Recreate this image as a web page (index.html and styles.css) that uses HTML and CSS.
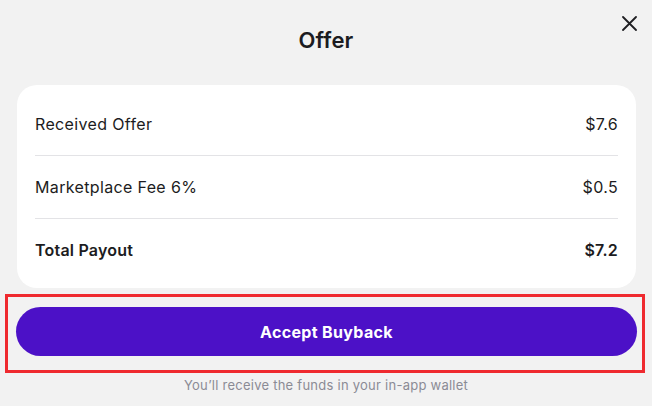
FILE: index.html
```html
<!DOCTYPE html>
<html>
<head>
<meta charset="utf-8">
<link rel="stylesheet" href="styles.css">
</head>
<body>
<div class="sheet">
  <header class="header">
    <span></span>
    <h1 class="title">Offer</h1>
    <button class="close" aria-label="Close">
      <svg width="15" height="15" viewBox="0 0 15 15"><path d="M1 1L14 14M14 1L1 14" stroke="#1f1f23" stroke-width="1.8" stroke-linecap="round"/></svg>
    </button>
  </header>
  <section class="card">
    <div class="row"><span>Received Offer</span><span>$7.6</span></div>
    <div class="row"><span>Marketplace Fee 6%</span><span>$0.5</span></div>
    <div class="row total"><span>Total Payout</span><span>$7.2</span></div>
  </section>
  <div class="highlight">
    <button class="accept">Accept Buyback</button>
  </div>
  <p class="note">You’ll receive the funds in your in-app wallet</p>
</div>
</body>
</html>
```
FILE: styles.css
```css
html, body {
  margin: 0;
  padding: 0;
  background: #f2f2f2;
}
body {
  font-family: Inter, "Noto Sans", sans-serif;
  color: #1c1c21;
  width: 652px;
  height: 406px;
  overflow: hidden;
}
.sheet {
  display: flex;
  flex-direction: column;
}
.header {
  display: grid;
  grid-template-columns: 1fr auto 1fr;
  align-items: start;
  height: 85px;
}
.title {
  margin: 27px 0 0;
  font-size: 22px;
  font-weight: 600;
  line-height: 27px;
  letter-spacing: 0.1px;
}
.close {
  justify-self: end;
  margin: 16px 15px 0 0;
  padding: 0;
  border: 0;
  background: none;
  width: 15px;
  height: 15px;
  display: flex;
}
.card {
  margin: 0 16px 0 17px;
  background: #fff;
  border-radius: 20px;
  padding: 8px 18px 7px;
  display: flex;
  flex-direction: column;
}
.row {
  display: flex;
  justify-content: space-between;
  align-items: center;
  height: 62px;
  font-size: 16px;
  letter-spacing: 0.35px;
  border-bottom: 1px solid #e3e3e6;
}
.row.total {
  border-bottom: 0;
  font-weight: 600;
  letter-spacing: 0.2px;
}
.highlight {
  margin: 6px 7px 0 5px;
  border: 3px solid #ef2a2f;
  padding: 10px 5px 14px 8px;
  display: flex;
}
.accept {
  flex: 1;
  height: 49px;
  border: 0;
  border-radius: 25px;
  background: #4c11c7;
  color: #fff;
  font-family: Inter, "Noto Sans", sans-serif;
  font-size: 16px;
  font-weight: 700;
  letter-spacing: 0.35px;
}
.note {
  margin: 4px 0 0;
  text-align: center;
  font-size: 13px;
  line-height: 16px;
  letter-spacing: 0.25px;
  color: #8b8b95;
}
```
